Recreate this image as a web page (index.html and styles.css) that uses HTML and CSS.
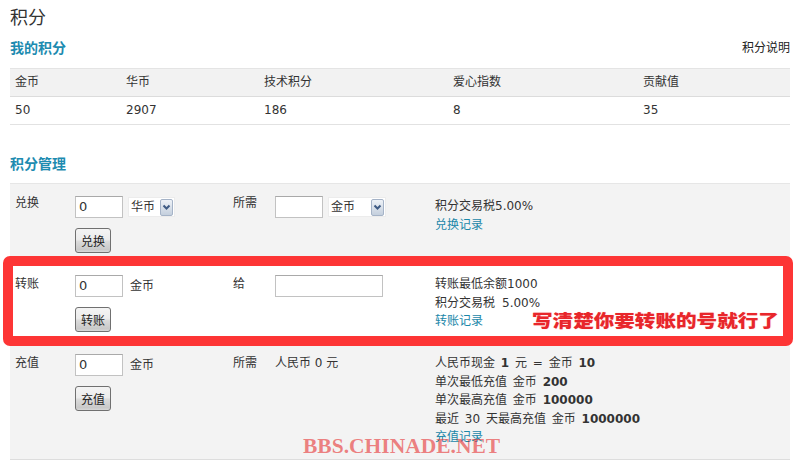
FILE: index.html
```html
<!DOCTYPE html>
<html lang="zh-CN">
<head>
<meta charset="utf-8">
<title>积分</title>
<link rel="stylesheet" href="styles.css">
</head>
<body>
<div class="page">
  <h1 class="title">积分</h1>
  <div class="section-head">
    <h2 class="section-title">我的积分</h2>
    <a class="help" href="#">积分说明</a>
  </div>
  <table class="credits">
    <colgroup>
      <col class="k1"><col class="k2"><col class="k3"><col class="k4"><col class="k5">
    </colgroup>
    <thead>
      <tr><th>金币</th><th>华币</th><th>技术积分</th><th>爱心指数</th><th>贡献值</th></tr>
    </thead>
    <tbody>
      <tr><td>50</td><td>2907</td><td>186</td><td>8</td><td>35</td></tr>
    </tbody>
  </table>

  <h2 class="section-title mgmt">积分管理</h2>
  <table class="manage">
    <colgroup>
      <col class="m1"><col class="m2"><col class="m3"><col class="m4"><col class="m5">
    </colgroup>
    <tbody>
      <tr class="r1">
        <td class="label">兑换</td>
        <td>
          <div class="line">
            <span class="input">0</span>
            <span class="select s-narrow"><span class="opt">华币</span><span class="arrow"><svg width="11" height="15" viewBox="0 0 11 15"><path d="M2.5 5.5 L5.5 8.5 L8.5 5.5" fill="none" stroke="#3f5b84" stroke-width="2"/></svg></span></span>
          </div>
          <button class="btn" type="button">兑换</button>
        </td>
        <td class="label">所需</td>
        <td>
          <div class="line">
            <span class="input"></span>
            <span class="select s-wide"><span class="opt">金币</span><span class="arrow"><svg width="11" height="15" viewBox="0 0 11 15"><path d="M2.5 5.5 L5.5 8.5 L8.5 5.5" fill="none" stroke="#3f5b84" stroke-width="2"/></svg></span></span>
          </div>
        </td>
        <td class="info">
          <div>积分交易税5.00%</div>
          <div><a href="#">兑换记录</a></div>
        </td>
      </tr>
      <tr class="r2">
        <td class="label">转账</td>
        <td>
          <div class="line">
            <span class="input">0</span>
            <span class="unit">金币</span>
          </div>
          <button class="btn" type="button">转账</button>
        </td>
        <td class="label">给</td>
        <td>
          <div class="line">
            <span class="input long"></span>
          </div>
        </td>
        <td class="info">
          <div>转账最低余额1000</div>
          <div>积分交易税<span class="gap">5.00%</span></div>
          <div><a href="#">转账记录</a></div>
        </td>
      </tr>
      <tr class="r3">
        <td class="label">充值</td>
        <td>
          <div class="line">
            <span class="input">0</span>
            <span class="unit">金币</span>
          </div>
          <button class="btn" type="button">充值</button>
        </td>
        <td class="label">所需</td>
        <td class="label">人民币 0 元</td>
        <td class="info">
          <div>人民币现金 <b>1</b> 元 = 金币 <b>10</b></div>
          <div>单次最低充值 金币 <b>200</b></div>
          <div>单次最高充值 金币 <b>100000</b></div>
          <div>最近 30 天最高充值 金币 <b>1000000</b></div>
          <div><a href="#">充值记录</a></div>
        </td>
      </tr>
    </tbody>
  </table>

  <div class="mark-box"></div>
  <div class="mark-note">写清楚你要转账的号就行了</div>
  <div class="watermark">BBS.CHINADE.NET</div>
</div>
</body>
</html>
```
FILE: styles.css
```css
* { box-sizing: border-box; }
html, body { margin: 0; padding: 0; background: #fff; }
body {
  font-family: "DejaVu Sans", "Noto Sans CJK SC", sans-serif;
  font-size: 12px;
  line-height: 18px;
  color: #333;
}
.page {
  position: relative;
  width: 806px;
  height: 467px;
  padding-left: 10px;
  overflow: hidden;
}
.title {
  margin: 0;
  padding-top: 5px;
  font-size: 18px;
  line-height: 26px;
  font-weight: normal;
  color: #333;
}
.section-head {
  display: flex;
  justify-content: space-between;
  align-items: center;
  width: 780px;
  height: 20px;
  margin-top: 7px;
}
.section-title {
  margin: 0;
  font-size: 14px;
  line-height: 20px;
  font-weight: bold;
  color: #1d8bb0;
}
.help { color: #222; text-decoration: none; font-size: 12px; }
.mgmt { margin-top: 29px; }

table {
  width: 780px;
  table-layout: fixed;
  border-collapse: separate;
  border-spacing: 0;
}
.credits { margin-top: 10px; }
.k1 { width: 111px; } .k2 { width: 138px; } .k3 { width: 189px; } .k4 { width: 190px; } .k5 { width: 152px; }
.credits th {
  text-align: left;
  font-weight: normal;
  padding: 0 5px;
  line-height: 27px;
  background: #f2f2f2;
  border-top: 1px solid #e4e4e4;
  border-bottom: 1px solid #dcdcdc;
}
.credits td {
  padding: 0 5px;
  line-height: 27px;
  border-bottom: 1px solid #e2e2e2;
}

.manage {
  margin-top: 9px;
  border-top: 1px solid #e6e6e6;
  border-bottom: 1px solid #dddddd;
}
.m1 { width: 60px; } .m2 { width: 158px; } .m3 { width: 42px; } .m4 { width: 160px; } .m5 { width: 360px; }
.manage td {
  vertical-align: top;
  padding: 10px 5px 12px;
  background: #f3f3f3;
}
.manage tr.r2 td { background: #fff; }
.manage .r1 .line { margin-top: 2px; }
.manage .r1 .info { padding-top: 13px; }

.line {
  display: flex;
  align-items: center;
  height: 22px;
}
.input {
  display: inline-block;
  width: 48px;
  height: 22px;
  border: 1px solid #c2c2c2;
  border-top-color: #a9a9a9;
  background: #fff;
  padding: 0 3px;
  font-size: 13px;
  line-height: 20px;
  color: #333;
}
.input.long { width: 108px; }
.unit { margin-left: 7px; }
.select {
  display: inline-flex;
  align-items: center;
  justify-content: space-between;
  height: 20px;
  margin-left: 5px;
  padding: 0 1px 0 2px;
  background: #fff;
  border: 1px solid #ececec;
}
.s-narrow { width: 47px; }
.s-wide { width: 58px; }
.arrow {
  display: inline-flex;
  width: 13px;
  height: 17px;
  align-items: center;
  justify-content: center;
  border: 1px solid #a5b3c7;
  border-radius: 2px;
  background: linear-gradient(#eef2f7, #c4cfdd);
}
.arrow svg { display: block; }
.btn {
  display: block;
  margin-top: 10px;
  width: 36px;
  height: 25px;
  padding: 0;
  font-family: "Noto Sans CJK SC", sans-serif;
  font-size: 12px;
  color: #222;
  border: 1px solid #707070;
  border-radius: 3px;
  background: linear-gradient(#f4f4f4 0%, #ececec 45%, #dadada 55%, #c9c9c9 90%, #d8d8d8 100%);
}
.info { line-height: 18.5px; }
.info b { font-weight: bold; }
.info div { white-space: nowrap; word-spacing: 2px; }
.info a { color: #1b87a9; text-decoration: none; }
.gap { margin-left: 7px; }

.mark-box {
  position: absolute;
  left: 3px;
  top: 256px;
  width: 790px;
  height: 90px;
  border: 10px solid #fd3535;
  border-radius: 7px;
}
.mark-note {
  position: absolute;
  left: 532px;
  top: 311px;
  font-family: "Noto Sans CJK SC", sans-serif;
  font-weight: 900;
  font-size: 17px;
  line-height: 17px;
  color: #e8262b;
  white-space: nowrap;
  transform: scaleX(1.21);
  transform-origin: left top;
  text-shadow: 0 0 1px #ffb0b0;
}
.watermark {
  position: absolute;
  left: 303px;
  top: 435px;
  font-family: "Liberation Serif", serif;
  font-weight: bold;
  font-size: 21.5px;
  line-height: 22px;
  color: rgba(230, 40, 40, 0.58);
  white-space: nowrap;
}
```
